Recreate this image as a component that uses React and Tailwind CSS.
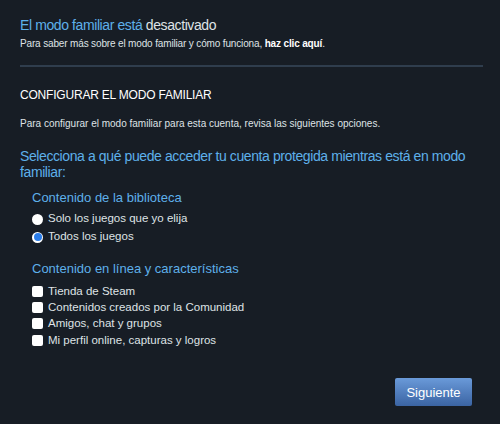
export default function App() {
  const font = { fontFamily: '"Liberation Sans", Arial, sans-serif' };
  const options = [
    "Tienda de Steam",
    "Contenidos creados por la Comunidad",
    "Amigos, chat y grupos",
    "Mi perfil online, capturas y logros",
  ];
  return (
    <div className="w-[500px] h-[424px] bg-[#171d25] text-[#c6d4df] px-5 pt-[17px]" style={font}>
      <div className="text-[14px] leading-[16px] tracking-[-0.4px] text-[#5eb0ea]">
        El modo familiar está <span className="text-[#dfe3e6]">desactivado</span>
      </div>
      <div className="mt-[4px] text-[10px] leading-[13px] tracking-[-0.15px] text-[#dfe3e6]">
        Para saber más sobre el modo familiar y cómo funciona, <span className="font-bold text-white">haz clic aquí</span>.
      </div>
      <div className="mt-[15px] mr-[-3px] h-[2px] bg-[#2f3d4d]" />

      <div className="mt-[20px] text-[12px] leading-[16px] tracking-[-0.2px] text-white">CONFIGURAR EL MODO FAMILIAR</div>
      <div className="mt-[14px] text-[10px] leading-[13px] text-[#dfe3e6]">
        Para configurar el modo familiar para esta cuenta, revisa las siguientes opciones.
      </div>

      <div className="mt-[18px] pr-[10px] text-[14px] leading-[16px] tracking-[-0.4px] text-[#5eb0ea]">
        Selecciona a qué puede acceder tu cuenta protegida mientras está en modo familiar:
      </div>

      <div className="ml-3 mt-[10px]">
        <div className="text-[13px] leading-[16px] text-[#5eb0ea]">Contenido de la biblioteca</div>
        <div className="mt-[4px] flex flex-col">
          <label className="flex items-center gap-[5px] h-[18px] text-[11.5px] text-[#dfe3e6]">
            <span className="w-[11px] h-[11px] rounded-full bg-white" />
            Solo los juegos que yo elija
          </label>
          <label className="flex items-center gap-[5px] h-[18px] text-[11.5px] text-[#dfe3e6]">
            <span className="w-[11px] h-[11px] rounded-full bg-white flex items-center justify-center">
              <span className="w-[8px] h-[8px] rounded-full bg-[#2b7de9]" />
            </span>
            Todos los juegos
          </label>
        </div>

        <div className="mt-[15px] text-[13px] leading-[16px] text-[#5eb0ea]">Contenido en línea y características</div>
        <div className="mt-[6px] flex flex-col">
          {options.map((t) => (
            <label key={t} className="flex items-center gap-[5px] h-[16.33px] text-[11.5px] text-[#dfe3e6]">
              <span className="w-[11px] h-[11px] rounded-[2px] bg-white" />
              {t}
            </label>
          ))}
        </div>
      </div>

      <div className="mt-[30px] flex justify-end pr-[8px]">
        <button className="w-[77px] h-[28px] rounded-[2px] bg-gradient-to-b from-[#6a9ad9] to-[#3b64a3] text-[13px] text-white">
          Siguiente
        </button>
      </div>
    </div>
  );
}
